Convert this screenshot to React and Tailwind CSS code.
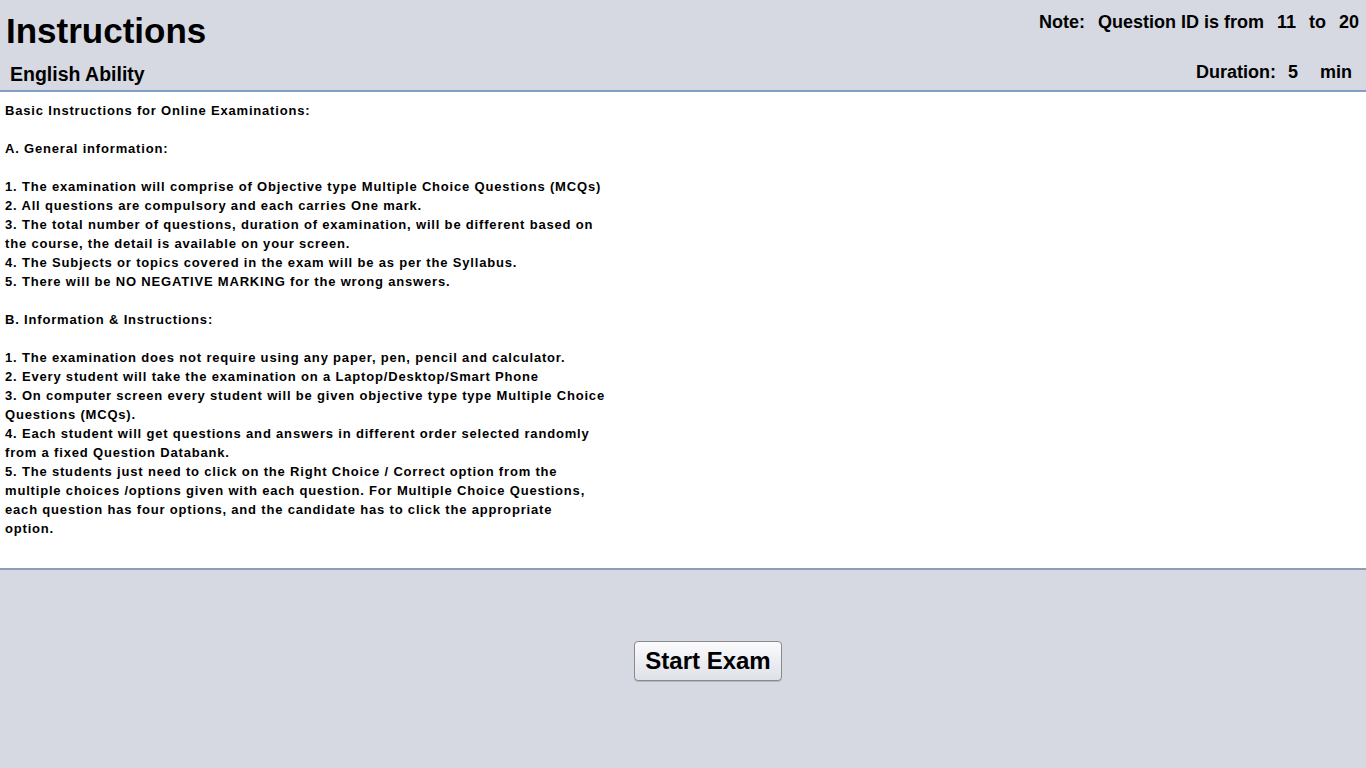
import React from "react";

const lines = [
  "Basic Instructions for Online Examinations:",
  "",
  "A. General information:",
  "",
  "1. The examination will comprise of Objective type Multiple Choice Questions (MCQs)",
  "2. All questions are compulsory and each carries One mark.",
  "3. The total number of questions, duration of examination, will be different based on",
  "the course, the detail is available on your screen.",
  "4. The Subjects or topics covered in the exam will be as per the Syllabus.",
  "5. There will be NO NEGATIVE MARKING for the wrong answers.",
  "",
  "B. Information & Instructions:",
  "",
  "1. The examination does not require using any paper, pen, pencil and calculator.",
  "2. Every student will take the examination on a Laptop/Desktop/Smart Phone",
  "3. On computer screen every student will be given objective type type Multiple Choice",
  "Questions (MCQs).",
  "4. Each student will get questions and answers in different order selected randomly",
  "from a fixed Question Databank.",
  "5. The students just need to click on the Right Choice / Correct option from the",
  "multiple choices /options given with each question. For Multiple Choice Questions,",
  "each question has four options, and the candidate has to click the appropriate",
  "option.",
];

export default function App() {
  return (
    <div className="h-[768px] w-full bg-[#d6d9e1] font-['Liberation_Sans',Arial,sans-serif] font-bold text-black flex flex-col">
      {/* Header */}
      <div className="h-[92px] flex justify-between border-b-2 border-[#7f9fc4]">
        <div className="flex flex-col pl-[6px]">
          <h1 className="text-[35px] leading-[40px] mt-[11px]">Instructions</h1>
          <div className="text-[19.5px] leading-[24px] pl-[4px] mt-[11px]">English Ability</div>
        </div>
        <div className="flex flex-col items-end text-[18px] leading-[20px]">
          <div className="flex gap-[13px] mt-[12px] pr-[7px]">
            <span>Note:</span>
            <span>Question ID is from</span>
            <span>11</span>
            <span>to</span>
            <span>20</span>
          </div>
          <div className="flex mt-[30px] pr-[14px]">
            <span>Duration:</span>
            <span className="ml-[12px]">5</span>
            <span className="ml-[22px]">min</span>
          </div>
        </div>
      </div>

      {/* Instructions panel */}
      <div className="h-[478px] bg-white border-b-2 border-[#8d9db3] pl-[5px] pt-[9px] text-[13px] leading-[19px] tracking-[0.82px]">
        {lines.map((l, i) => (
          <div key={i} className="h-[19px] whitespace-pre">
            {l}
          </div>
        ))}
      </div>

      {/* Footer */}
      <div className="flex-1 flex justify-center pt-[71px] pl-[50px]">
        <button className="h-[40px] w-[148px] rounded-[4px] border border-[#8a8a8a] bg-gradient-to-b from-[#fbfbfd] to-[#dfe1e8] text-[24px] leading-none font-bold shadow-[0_1px_0_rgba(0,0,0,0.15)]">
          Start Exam
        </button>
      </div>
    </div>
  );
}
